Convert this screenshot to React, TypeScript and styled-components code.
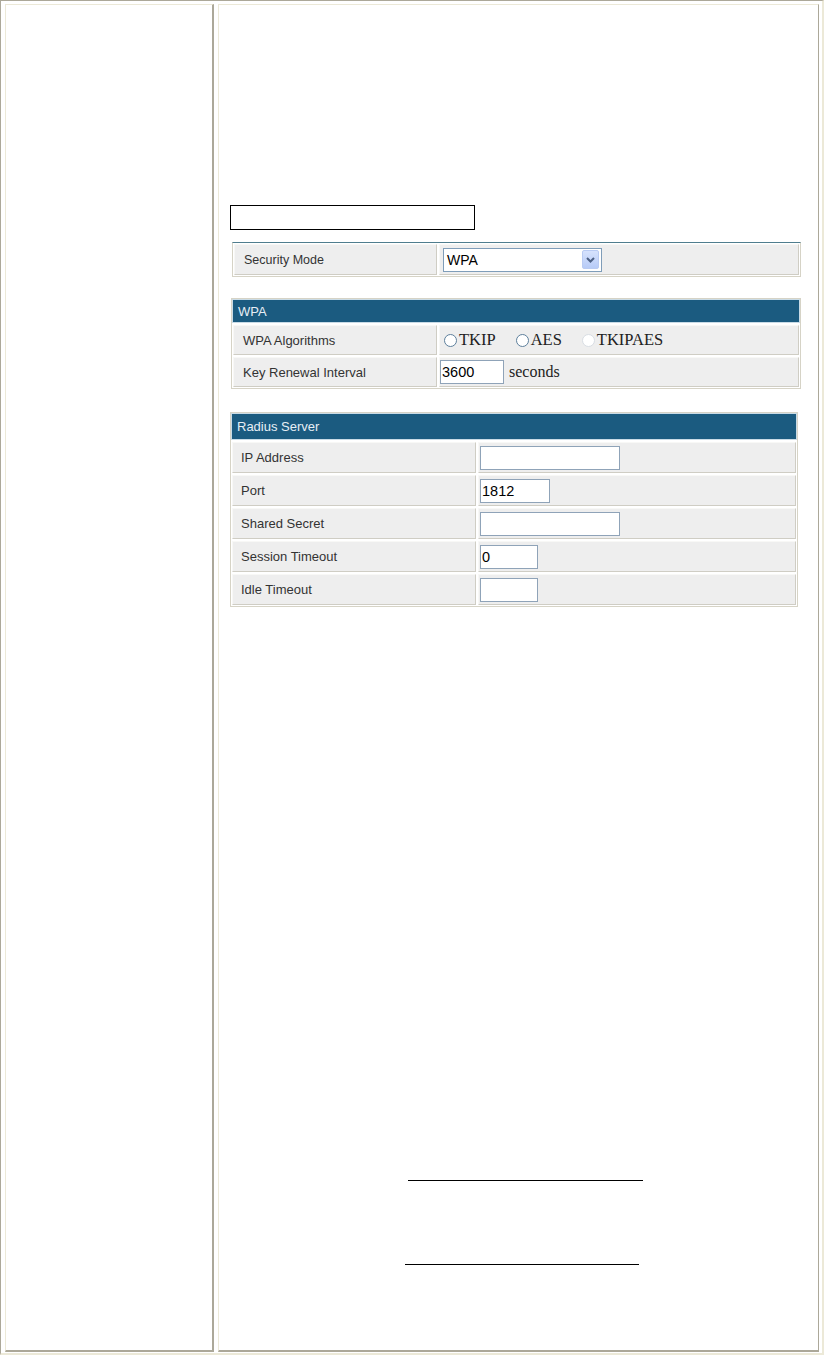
import React from "react";
import styled, { createGlobalStyle } from "styled-components";

const GlobalStyle = createGlobalStyle`
  html, body {
    margin: 0;
    padding: 0;
    background: #ffffff;
  }
  * {
    box-sizing: border-box;
  }
`;

const RADIUS_ROWS = [
  { label: "IP Address", value: "", width: 140 },
  { label: "Port", value: "1812", width: 70 },
  { label: "Shared Secret", value: "", width: 140 },
  { label: "Session Timeout", value: "0", width: 58 },
  { label: "Idle Timeout", value: "", width: 58 },
];

const ALGORITHMS = [
  { title: "TKIP", disabled: false },
  { title: "AES", disabled: false },
  { title: "TKIPAES", disabled: true },
];

const App: React.FC = () => {
  return (
    <>
      <GlobalStyle />
      <Frame>
        <SideCell />
        <MainCell>
          <EmptyBox />

          <FormTable $width={569} $offset={2} $topLine>
            <Row $label={203} $height={31}>
              <LabelCell $size={12.5} $indent={9}>
                Security Mode
              </LabelCell>
              <ValueCell $indent={3}>
                <Select>
                  <SelectText>WPA</SelectText>
                  <SelectButton>
                    <svg width="9" height="6" viewBox="0 0 9 6">
                      <path
                        d="M1 1 L4.5 4.5 L8 1"
                        fill="none"
                        stroke="#4d6185"
                        strokeWidth="2"
                      />
                    </svg>
                  </SelectButton>
                </Select>
              </ValueCell>
            </Row>
          </FormTable>

          <FormTable $width={570} $offset={1} $gap={21}>
            <Header $height={24}>WPA</Header>
            <Row $label={204} $height={30}>
              <LabelCell>WPA Algorithms</LabelCell>
              <ValueCell $indent={4}>
                {ALGORITHMS.map((item) => (
                  <RadioOption key={item.title}>
                    <Radio $disabled={item.disabled} />
                    {item.title}
                  </RadioOption>
                ))}
              </ValueCell>
            </Row>
            <Row $label={204} $height={30}>
              <LabelCell>Key Renewal Interval</LabelCell>
              <ValueCell $indent={0}>
                <TextInput $width={64}>3600</TextInput>
                <Unit>seconds</Unit>
              </ValueCell>
            </Row>
          </FormTable>

          <FormTable $width={568} $offset={0} $gap={23}>
            <Header $height={27}>Radius Server</Header>
            {RADIUS_ROWS.map((row) => (
              <Row key={row.label} $label={244} $height={31}>
                <LabelCell $indent={8}>{row.label}</LabelCell>
                <ValueCell $indent={1}>
                  <TextInput $width={row.width}>{row.value}</TextInput>
                </ValueCell>
              </Row>
            ))}
          </FormTable>

          <BlankLine $top={573} $left={178} $width={235} />
          <BlankLine $top={83} $left={175} $width={234} />
        </MainCell>
      </Frame>
    </>
  );
};

export default App;

const Frame = styled.div`
  width: 824px;
  height: 1355px;
  display: grid;
  grid-template-columns: 209px 601px;
  column-gap: 4px;
  padding: 3px 3px 1px 4px;
  border-top: 1px solid #aca899;
  border-left: 1px solid #aca899;
  border-right: 2px solid #ece9d8;
  border-bottom: 2px solid #ece9d8;
  background: #ffffff;
`;

const Cell = styled.div`
  border-top: 1px solid #ece9d8;
  border-left: 1px solid #ece9d8;
  border-right: 2px solid #aca899;
  border-bottom: 2px solid #aca899;
  background: #ffffff;
`;

const SideCell = styled(Cell)``;

const MainCell = styled(Cell)`
  display: flex;
  flex-direction: column;
  align-items: flex-start;
  padding: 200px 0 0 11px;
  border-right-width: 1px;
`;

const EmptyBox = styled.div`
  width: 245px;
  height: 25px;
  border: 1px solid #000000;
`;

const FormTable = styled.div<{
  $width: number;
  $offset: number;
  $gap?: number;
  $topLine?: boolean;
}>`
  width: ${(p) => p.$width}px;
  margin-left: ${(p) => p.$offset}px;
  margin-top: ${(p) => p.$gap ?? 12}px;
  display: flex;
  flex-direction: column;
  gap: 2px;
  padding: 1px;
  border: 1px solid #d6d3c6;
  border-top-color: ${(p) => (p.$topLine ? "#4f7d8e" : "#d6d3c6")};
  background: #ffffff;
  font-family: "Liberation Sans", Arial, sans-serif;
`;

const Header = styled.div<{ $height: number }>`
  height: ${(p) => p.$height}px;
  margin: -1px -1px 0;
  display: flex;
  align-items: center;
  padding-left: 5px;
  background: #1b5b80;
  border: 1px solid #c9dbe6;
  color: #e6eef5;
  font-size: 13px;
`;

const Row = styled.div<{ $label: number; $height: number }>`
  display: grid;
  grid-template-columns: ${(p) => p.$label}px 1fr;
  column-gap: 2px;
  height: ${(p) => p.$height}px;
`;

const BaseCell = styled.div`
  display: flex;
  align-items: center;
  background: #eeeeee;
  border-top: 1px solid #f8f8f6;
  border-left: 1px solid #f8f8f6;
  border-right: 1px solid #cfcdc4;
  border-bottom: 1px solid #cfcdc4;
`;

const LabelCell = styled(BaseCell)<{ $size?: number; $indent?: number }>`
  padding-left: ${(p) => p.$indent ?? 9}px;
  font-size: ${(p) => p.$size ?? 13}px;
  color: #333333;
`;

const ValueCell = styled(BaseCell)<{ $indent: number }>`
  padding-left: ${(p) => p.$indent}px;
`;

const Select = styled.div`
  width: 159px;
  height: 24px;
  display: flex;
  align-items: center;
  justify-content: space-between;
  border: 1px solid #7f9db9;
  background: #ffffff;
  padding: 0 2px 0 3px;
`;

const SelectText = styled.span`
  font-size: 14px;
  color: #000000;
`;

const SelectButton = styled.div`
  width: 17px;
  height: 19px;
  display: flex;
  align-items: center;
  justify-content: center;
  border: 1px solid #b9cbf3;
  border-radius: 2px;
  background: linear-gradient(#d6e2fd, #b7cbf7);
`;

const RadioOption = styled.label`
  display: flex;
  align-items: center;
  margin-right: 20px;
  font-family: "Liberation Serif", "Times New Roman", serif;
  font-size: 16.5px;
  color: #222222;
`;

const Radio = styled.span<{ $disabled?: boolean }>`
  width: 13px;
  height: 13px;
  border-radius: 50%;
  margin-right: 2px;
  border: 1px solid ${(p) => (p.$disabled ? "#d8dde3" : "#5d7f9c")};
  background: #ffffff;
`;

const TextInput = styled.div<{ $width: number }>`
  width: ${(p) => p.$width}px;
  height: 24px;
  display: flex;
  align-items: center;
  padding-left: 1px;
  border: 1px solid #8fa3b8;
  background: #ffffff;
  font-size: 14.5px;
  color: #000000;
`;

const Unit = styled.span`
  margin-left: 5px;
  font-family: "Liberation Serif", "Times New Roman", serif;
  font-size: 16px;
  color: #222222;
`;

const BlankLine = styled.div<{ $top: number; $left: number; $width: number }>`
  width: ${(p) => p.$width}px;
  margin-top: ${(p) => p.$top}px;
  margin-left: ${(p) => p.$left}px;
  border-bottom: 1px solid #000000;
`;
